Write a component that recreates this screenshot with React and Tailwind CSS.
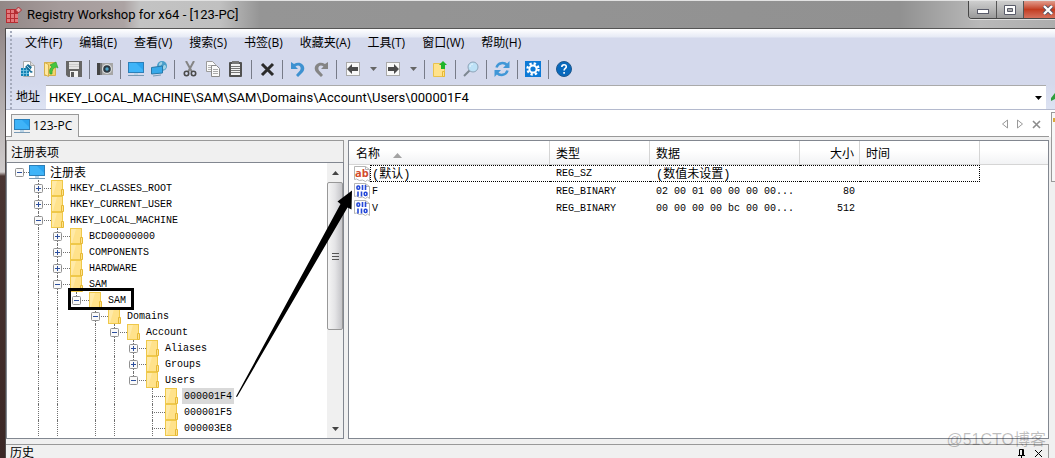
import { Fragment } from "react";

const menus = ["文件(F)", "编辑(E)", "查看(V)", "搜索(S)", "书签(B)", "收藏夹(A)", "工具(T)", "窗口(W)", "帮助(H)"];

// guides: which ancestor columns keep a vertical line on this row
const keys = [
  { label: "HKEY_CLASSES_ROOT", guides: [], expander: "plus" },
  { label: "HKEY_CURRENT_USER", guides: [], expander: "plus" },
  { label: "HKEY_LOCAL_MACHINE", guides: [], expander: "minus" },
  { label: "BCD00000000", guides: [true], expander: "plus" },
  { label: "COMPONENTS", guides: [true], expander: "plus" },
  { label: "HARDWARE", guides: [true], expander: "plus" },
  { label: "SAM", guides: [true], expander: "minus" },
  { label: "SAM", guides: [true, true], expander: "minus", last: true, marked: true },
  { label: "Domains", guides: [true, true, false], expander: "minus" },
  { label: "Account", guides: [true, true, false, true], expander: "minus" },
  { label: "Aliases", guides: [true, true, false, true, true], expander: "plus" },
  { label: "Groups", guides: [true, true, false, true, true], expander: "plus" },
  { label: "Users", guides: [true, true, false, true, true], expander: "minus", last: true },
  { label: "000001F4", guides: [true, true, false, true, true, false], selected: true },
  { label: "000001F5", guides: [true, true, false, true, true, false] },
  { label: "000003E8", guides: [true, true, false, true, true, false] },
];

const values = [
  { icon: "text", name: "(默认)", type: "REG_SZ", data: "(数值未设置)", size: "", focused: true },
  { icon: "binary", name: "F", type: "REG_BINARY", data: "02 00 01 00 00 00 00...", size: "80" },
  { icon: "binary", name: "V", type: "REG_BINARY", data: "00 00 00 00 bc 00 00...", size: "512" },
];

function Svg({ children, w = 16, h = 16, className = "" }) {
  return (
    <svg width={w} height={h} viewBox={`0 0 ${w} ${h}`} className={`shrink-0 ${className}`} aria-hidden="true">
      {children}
    </svg>
  );
}

const Monitor = () => (
  <Svg>
    <rect x="0.5" y="1.5" width="15" height="10" fill="#3fb4f8" stroke="#2d7fb8" />
    <path d="M8 2H15V9Z" fill="#2ba4ef" />
    <path d="M6 12h4v2H6z" fill="#b9d3e6" />
    <path d="M0 14.5h16" stroke="#7899b3" />
  </Svg>
);

const Folder = () => (
  <Svg w={13}>
    <rect x="0.5" y="0.5" width="11" height="15" fill="#ffe28b" stroke="#efc84a" />
    <path d="M1 1h5L2 15H1z" fill="#ffeaa8" />
    <path d="M10.5 9.5h2v6h-2z" fill="#ffe28b" stroke="#e6b935" />
  </Svg>
);

const icons = {
  create: (
    <Svg>
      <path d="M3.500.5h7l4 4v11h-11z" fill="#fbfbfb" stroke="#a9a9a9" />
      <path d="M10.500.5v4h4" fill="#ddd" stroke="#a9a9a9" />
      <path d="M1 7h8v8H1z" fill="#1482b4" />
      <path d="M1 9.500h8M1 12.500h8M3.500 7v8M6.500 7v8" stroke="#7fcbe8" strokeWidth=".8" />
      <path d="m5 6 3-3 4 3-2 3 3 2-2 1-3-3z" fill="#1b6f98" />
      <path d="m7 5 3 3" stroke="#9cd3ea" />
    </Svg>
  ),
  open: (
    <Svg>
      <path d="M1.500 1.500h11v13h-11z" fill="#f3d36c" stroke="#d6b04c" />
      <path d="M1.500 1.500l4 2v12l-4-2z" fill="#ffe89f" stroke="#d6b04c" />
      <path d="M7 13c-1-4 0-6 2-7L7 4l6-3 2 6-2-1c-3 1-4 3-4 7z" fill="#45c63f" stroke="#2a9a2c" strokeWidth=".6" />
    </Svg>
  ),
  save: (
    <Svg>
      <path d="M0 0h16v16H2l-2-2z" fill="#666" />
      <path d="M3 1h10v7H3z" fill="#e4e4e4" />
      <path d="M3 3.500h10M3 5.500h10" stroke="#ccc" />
      <path d="M4 10h8v6H4z" fill="#f3f3f3" />
      <path d="M5 11h3v5H5z" fill="#5c5c5c" />
    </Svg>
  ),
  camera: (
    <Svg>
      <path d="M0 2h3v12H0z" fill="#454545" />
      <path d="M3 2h13v12H3z" fill="#a6a6a6" />
      <path d="M3 2h2v12H3z" fill="#777" />
      <circle cx="10" cy="8" r="5" fill="#ddd" />
      <circle cx="10" cy="8" r="3.800" fill="#2d3943" />
      <circle cx="10" cy="8" r="1.700" fill="#51a6c8" />
    </Svg>
  ),
  monitor: <Monitor />,
  network: (
    <Svg>
      <circle cx="11" cy="5" r="5" fill="#4a9fca" />
      <path d="M8 3c2-3 4-2 3 0S8 6 8 3m5 1c2 0 3 2 1 4s-3-2-1-4" fill="#a2d3e5" />
      <path d="M.5 6.500 11.500 5v7L.5 13z" fill="#37a9ea" stroke="#2879a8" />
      <path d="M2 15l8-1" stroke="#7899b3" />
    </Svg>
  ),
  cut: (
    <Svg>
      <path d="M4 0l6 11M12 0L6 11" stroke="#858585" strokeWidth="2" />
      <circle cx="4.500" cy="12.500" r="2.200" fill="none" stroke="#4b4b4b" strokeWidth="1.600" />
      <circle cx="11.500" cy="12.500" r="2.200" fill="none" stroke="#4b4b4b" strokeWidth="1.600" />
    </Svg>
  ),
  copy: (
    <Svg>
      <path d="M1.500.5h6l3 3v7h-9z" fill="#fafafa" stroke="#9b9b9b" />
      <path d="M3 4.500h5M3 6.500h5M3 8.500h3" stroke="#b5b5b5" />
      <path d="M6.500 4.500h5l3 3v8h-8z" fill="#fafafa" stroke="#8b8b8b" />
      <path d="M8 8.500h5M8 10.500h5M8 12.500h5" stroke="#aaa" />
    </Svg>
  ),
  paste: (
    <Svg>
      <rect x="1" y="1" width="13" height="15" rx="1" fill="#515151" />
      <path d="M3 3h9v11H3z" fill="#f3f3f3" />
      <path d="M4 0h7v3H4z" fill="#777" />
      <path d="M3 5.500h9M3 7.500h9M3 9.500h9M3 11.500h9" stroke="#777" />
    </Svg>
  ),
  remove: (
    <Svg>
      <path d="m3 3 11 11M14 3 3 14" stroke="#2b2b2b" strokeWidth="3" />
    </Svg>
  ),
  undo: (
    <Svg>
      <path d="M1 1v7h7L5.500 5.500C9 3 12 6 10 9.500L6 14l2 2 5-5c4-5-2-12-9-8z" fill="#3e92d1" />
    </Svg>
  ),
  redo: (
    <Svg>
      <path d="M15 1v7H8l2.500-2.500C7 3 4 6 6 9.500l4 4.500-2 2-5-5c-4-5 2-12 9-8z" fill="#858585" />
    </Svg>
  ),
  back: (
    <Svg>
      <rect x="1.500" y="1.500" width="13" height="13" fill="#f8f8f8" stroke="#aaa" />
      <path d="M2 8l5-5v3h6v4H7v3z" fill="#4b4b4b" />
    </Svg>
  ),
  forward: (
    <Svg>
      <rect x="1.500" y="1.500" width="13" height="13" fill="#f8f8f8" stroke="#aaa" />
      <path d="M14 8 9 3v3H3v4h6v3z" fill="#4b4b4b" />
    </Svg>
  ),
  up: (
    <Svg>
      <path d="M1.500 2.500h11v13h-11z" fill="#ffe28b" stroke="#e9c24d" />
      <path d="M10.500 10.500h2v5h-2z" fill="#ffe28b" stroke="#e6b935" />
      <path d="m11 0 4 4h-2v4H9V4H7z" fill="#1fb52b" />
    </Svg>
  ),
  search: (
    <Svg>
      <path d="m1 15 6-6" stroke="#7c8791" strokeWidth="2" />
      <circle cx="10" cy="6" r="5" fill="#bde2f7" stroke="#8da4b8" />
      <path d="M7 6c0-2 1-3 3-3" stroke="#e7f7ff" fill="none" />
    </Svg>
  ),
  refresh: (
    <Svg>
      <path d="M2.500 6.500C4 1.500 10 1 13 4" fill="none" stroke="#4097d7" strokeWidth="2.500" />
      <path d="M15.500 0v7H9z" fill="#4097d7" />
      <path d="M13.500 9.500C12 14.500 6 15 3 12" fill="none" stroke="#4097d7" strokeWidth="2.500" />
      <path d="M.5 16V9H7z" fill="#4097d7" />
    </Svg>
  ),
  settings: (
    <Svg>
      <path d="M0 0h16v16H0z" fill="#0c79d6" />
      <circle cx="8" cy="8" r="5.500" fill="none" stroke="#fff" strokeWidth="2.400" strokeDasharray="2.300 2.020" />
      <circle cx="8" cy="8" r="3.600" fill="none" stroke="#fff" strokeWidth="2" />
    </Svg>
  ),
  help: (
    <Svg>
      <circle cx="8" cy="8" r="7.500" fill="#0869bd" stroke="#20588c" />
      <path d="M5.800 6c0-3 4.500-3 4.500-.2 0 1.700-2.200 1.600-2.200 3.700M8.100 11v1.700" fill="none" stroke="#fff" strokeWidth="1.600" />
    </Svg>
  ),
};

const toolGroups = [
  ["create", "open", "save"],
  ["camera"],
  ["monitor", "network"],
  ["cut", "copy", "paste"],
  ["remove"],
  ["undo", "redo"],
  ["back", "forward"],
  ["up"],
  ["search"],
  ["refresh"],
  ["settings"],
  ["help"],
];

function TitleBar() {
  return (
    <header className="flex h-7 shrink-0 items-start border-t border-[#e2e2e2] bg-[linear-gradient(90deg,#928786_0,#a59b9b_60px,#aca3a3_124px,#c3c3c3_140px,#c0c0c0_220px,#959595_260px,#919191_900px,#b9b9b9_980px,#adadad_100%)]">
      <div className="flex h-full min-w-0 flex-1 items-center pl-[6px]">
        <Svg>
          <path d="M0 2h12v14H0z" fill="#b62c32" />
          <path d="M1 3h3v3H1zM5 3h3v3H5zM1 7h3v4H1zM5 7h3v4H5zM9 7h3v4H9zM1 12h3v3H1zM5 12h3v3H5zM9 12h3v3H9z" fill="#e3797c" />
          <path d="m12.500 0 3 3-3 3-3-3z" fill="#eaa4a5" stroke="#a92a30" />
        </Svg>
        <h1 className="ml-[5px] truncate font-[Roboto,sans-serif] text-[13px]">Registry Workshop for x64 - [123-PC]</h1>
      </div>
      <div className="flex h-[18px] w-[87px] shrink-0 overflow-hidden rounded-bl border-b border-l border-[#464646] shadow-[0_1px_0_#ddd]">
        <button aria-label="最小化" className="flex w-7 shrink-0 items-center justify-center border-r border-[#555] bg-linear-to-b from-[#cecece] via-[#b5b5b5] to-[#999]">
          <Svg w={12} h={10}>
            <rect x="0.500" y="4.500" width="11" height="4" fill="#fff" stroke="#595b69" />
          </Svg>
        </button>
        <button aria-label="最大化" className="flex w-[27px] shrink-0 items-center justify-center border-r border-[#555] bg-linear-to-b from-[#cecece] via-[#b5b5b5] to-[#999]">
          <Svg w={12} h={10}>
            <path d="M.5.5h11v9H.5z" fill="#fff" stroke="#595b69" />
            <path d="M3.500 3.500h5v3h-5z" fill="#aaa" stroke="#595b69" />
          </Svg>
        </button>
        <button aria-label="关闭" className="flex w-[47px] shrink-0 items-center justify-center bg-linear-to-b from-[#e09b8c] via-[#c23c20] to-[#d5705c]">
          <Svg w={12} h={10}>
            <path d="m2 1 8 8M10 1 2 9" stroke="#505265" strokeWidth="4" />
            <path d="m2 1 8 8M10 1 2 9" stroke="#fff" strokeWidth="2.400" />
          </Svg>
        </button>
      </div>
    </header>
  );
}

function ToolBar() {
  return (
    <div className="flex h-6 items-center">
      {toolGroups.map((group, i) => (
        <Fragment key={i}>
          {i > 0 && (
            <div className="flex w-2 shrink-0 justify-center">
              <div className="h-[19px] w-px bg-[#777b88]" />
            </div>
          )}
          {group.map((name) => (
            <Fragment key={name}>
              <button aria-label={name} className={`flex h-6 shrink-0 items-center justify-center ${name === "back" || name === "forward" ? "w-[26px]" : "w-[23px]"}`}>
                {icons[name]}
              </button>
              {(name === "back" || name === "forward") && (
                <button aria-label={`${name} history`} className="flex h-6 w-[14px] shrink-0 items-center justify-center">
                  <Svg w={7} h={4}>
                    <path d="M0 0h7L3.500 4z" fill="#666" />
                  </Svg>
                </button>
              )}
            </Fragment>
          ))}
        </Fragment>
      ))}
    </div>
  );
}

function CommandArea() {
  return (
    <div className="flex h-[81px] shrink-0 border-b border-[#b4bace] bg-[linear-gradient(180deg,#fff_0,#e6eaf5_8px,#d4d9ec_9px,#d4d9ec_55px,#dde3f3_100%)]">
      <div className="mt-[2px] ml-[4px] w-[6px] shrink-0 border-l-2 border-dotted border-[#a5abbc]" />
      <div className="flex min-w-0 flex-1 flex-col">
        <nav className="flex h-7 items-center gap-px pl-[1px]">
          {menus.map((m) => (
            <button key={m} className="px-2 text-[12px] whitespace-nowrap">{m}</button>
          ))}
        </nav>
        <ToolBar />
        <div className="mt-1 flex h-6 items-center">
          <label htmlFor="address" className="w-[30px] shrink-0 text-[12px] whitespace-nowrap">地址</label>
          <div className="flex h-full min-w-0 flex-1 items-center border-t border-[#aaa] bg-white">
            <input
              id="address"
              className="min-w-0 flex-1 pl-[3px] font-[Roboto,sans-serif] text-[13px] leading-5 outline-none"
              defaultValue="HKEY_LOCAL_MACHINE\SAM\SAM\Domains\Account\Users\000001F4"
            />
            <button aria-label="地址列表" className="flex h-full w-4 items-center justify-center">
              <Svg w={7} h={4}>
                <path d="M0 0h7L3.500 4z" fill="#000" />
              </Svg>
            </button>
          </div>
          <button aria-label="转到" className="flex w-[9px] justify-end overflow-hidden">
            <Svg w={4} h={8}>
              <path d="M0 8V5l4-5v6z" fill="#2f9e3c" />
            </Svg>
          </button>
        </div>
      </div>
    </div>
  );
}

function TabStrip() {
  return (
    <div className="flex h-[27px] shrink-0 items-end border-b border-[#999] bg-white pl-[5px]">
      <button className="-mb-px flex h-[23px] items-center gap-[3px] border border-b-0 border-[#999] bg-[#f0f0f0] pr-[6px] pl-[2px] text-[12px]">
        <Monitor />
        123-PC
      </button>
      <div className="mr-[8px] mb-[7px] ml-auto flex items-center gap-[9px]">
        <button aria-label="上一个标签">
          <Svg w={6} h={10}><path d="M5.500 1v8l-5-4z" fill="none" stroke="#999" /></Svg>
        </button>
        <button aria-label="下一个标签">
          <Svg w={6} h={10}><path d="M.5 1v8l5-4z" fill="none" stroke="#999" /></Svg>
        </button>
        <button aria-label="关闭标签">
          <Svg w={9} h={9}><path d="m1 1 7 7M8 1 1 8" stroke="#8c8c8c" strokeWidth="1.600" /></Svg>
        </button>
      </div>
    </div>
  );
}

function Expander({ kind }) {
  return (
    <Svg w={9} h={9}>
      <rect x="0.500" y="0.500" width="8" height="8" rx="1" fill="#fafafa" stroke="#919191" />
      <path d={kind === "plus" ? "M2 4.500h5M4.500 2v5" : "M2 4.500h5"} stroke="#2c4f9e" />
    </Svg>
  );
}

function TreeRow({ item }) {
  return (
    <li className="relative flex h-4 items-center pl-[19px]">
      {item.guides.map((on, i) => (
        <div key={i} className="flex h-4 w-[19px] shrink-0 pl-[9px]">
          {on && <div className="border-l border-dotted border-[#707070]" />}
        </div>
      ))}
      <div className="grid h-4 w-[22px] shrink-0 grid-cols-[19px_3px] items-center">
        <div className={`col-start-1 row-start-1 ml-[9px] border-l border-dotted border-[#707070] ${item.last ? "h-2 self-start" : "h-4"}`} />
        <div className="col-span-2 col-start-1 row-start-1 ml-[9px] border-t border-dotted border-[#707070]" />
        {item.expander && (
          <button aria-label={item.label} className="z-10 col-start-1 row-start-1 ml-[5px] w-[9px]">
            <Expander kind={item.expander} />
          </button>
        )}
      </div>
      <Folder />
      <span className={`ml-[4px] px-[2px] pt-[2px] leading-[14px] whitespace-nowrap ${item.selected ? "bg-[#d9d9d9]" : ""}`}>{item.label}</span>
      {item.marked && <div className="absolute -top-1 left-[58px] z-20 h-[22px] w-[66px] border-[3px] border-black" />}
    </li>
  );
}

function ScrollBar() {
  return (
    <div className="flex w-4 shrink-0 flex-col bg-[#f0f0f0]">
      <div className="flex h-[19px] items-center justify-center">
        <Svg w={7} h={4}><path d="M0 4h7L3.500 0z" fill="#444" /></Svg>
      </div>
      <div className="flex h-[148px] flex-col items-center justify-center gap-[2px] rounded-[2px] border border-[#989898] bg-linear-to-r from-[#f5f5f5] via-[#e4e4e6] to-[#c4c4c8]">
        <div className="h-px w-[7px] bg-[#555]" />
        <div className="h-px w-[7px] bg-[#555]" />
        <div className="h-px w-[7px] bg-[#555]" />
      </div>
      <div className="mt-auto flex h-[19px] items-center justify-center">
        <Svg w={7} h={4}><path d="M0 0h7L3.500 4z" fill="#444" /></Svg>
      </div>
    </div>
  );
}

function KeyPane() {
  return (
    <section className="flex w-[338px] shrink-0 flex-col">
      <h2 className="h-[22px] shrink-0 border border-b-0 border-[#999] pt-[2px] pl-1 text-[12px] leading-5">注册表项</h2>
      <div className="flex min-h-0 flex-1 border border-[#828790] bg-white">
        <ul className="min-w-0 flex-1 overflow-hidden pt-px pl-[3px] font-['Liberation_Mono','Noto_Sans_CJK_SC',monospace] text-[10px]">
          <li className="flex h-4 items-center">
            <div className="grid w-[19px] shrink-0 items-center">
              <div className="col-start-1 row-start-1 ml-[9px] border-t border-dotted border-[#707070]" />
              <button aria-label="注册表" className="z-10 col-start-1 row-start-1 ml-[5px] w-[9px]">
                <Expander kind="minus" />
              </button>
            </div>
            <Monitor />
            <span className="ml-[5px] pt-[4px] text-[12px] leading-[14px]">注册表</span>
          </li>
          {keys.map((item, i) => (
            <TreeRow key={i} item={item} />
          ))}
        </ul>
        <ScrollBar />
      </div>
    </section>
  );
}

function ValueIcon({ kind }) {
  return (
    <Svg>
      <path d="M.5.5h11l4 3v12l-2-1.500-2 1.500-3-1.500-3 .5-3-1.500-2 .5z" fill="#fff" stroke="#b5b5b5" />
      <path d="M11.500.5v3h4" fill="none" stroke="#b5b5b5" />
      {kind === "text" ? (
        <text x="1" y="11" fontSize="11" fontWeight="700" fill="#d2492a" fontFamily="Open Sans">ab</text>
      ) : (
        <g fill="none" stroke="#2448d8" strokeWidth="1.600">
          <rect x="3" y="3" width="2.600" height="3.200" rx="1" />
          <path d="M8.500 2v5M11.500 2v5M4 8.500v5M7.500 8.500v5" />
          <rect x="10.300" y="9.300" width="2.600" height="3.200" rx="1" />
        </g>
      )}
    </Svg>
  );
}

function ValuePane() {
  return (
    <section className="min-w-0 flex-1 overflow-hidden border border-[#828790] bg-white">
      <table className="w-full table-fixed border-separate border-spacing-0 font-['Liberation_Mono','Noto_Sans_CJK_SC',monospace] text-[10px]">
        <colgroup>
          <col className="w-[201px]" />
          <col className="w-[100px]" />
          <col className="w-[150px]" />
          <col className="w-[60px]" />
          <col className="w-[120px]" />
          <col />
        </colgroup>
        <thead>
          <tr className="h-6 bg-linear-to-b from-white from-40% to-[#f1f2f4] text-left text-[12px] leading-[17px] [&>th]:border-b [&>th]:border-[#d5d5d5] [&>th]:pt-[5px] [&>th]:font-normal">
            <th className="border-r pl-[7px]">
              <div className="flex items-center gap-[13px]">
                名称
                <Svg w={9} h={5}><path d="M0 5h9L4.500 0z" fill="#a3a3a3" /></Svg>
              </div>
            </th>
            <th className="border-r pl-[6px]">类型</th>
            <th className="border-r pl-[6px]">数据</th>
            <th className="border-r pr-[5px] text-right">大小</th>
            <th className="border-r pl-[6px]">时间</th>
            <th aria-label="空" />
          </tr>
        </thead>
        <tbody>
          {values.map((v) => (
            <tr key={v.name} className={`h-[17px] ${v.focused ? "[&>td:not(:first-child):not(:last-child)]:border-y [&>td]:border-dotted [&>td]:border-black" : ""}`}>
              <td className="p-0 pl-[5px]">
                <div className="flex items-center">
                  <ValueIcon kind={v.icon} />
                  <span className={`h-[17px] flex-1 ${v.focused ? "border-y border-l border-dotted border-black pt-[4px] pl-px text-[12px] leading-[11px]" : "pt-[2px] pl-[2px] leading-[15px]"}`}>{v.name}</span>
                </div>
              </td>
              <td className={`p-0 pl-[6px] whitespace-nowrap ${v.focused ? "pt-px leading-[14px]" : "pt-[2px] leading-[15px]"}`}>{v.type}</td>
              <td className={`p-0 pl-[6px] whitespace-nowrap ${v.focused ? "pt-[4px] text-[12px] leading-[11px]" : "pt-[2px] leading-[15px]"}`}>{v.data}</td>
              <td className={`p-0 pr-[5px] text-right ${v.focused ? "" : "pt-[2px] leading-[15px]"}`}>{v.size}</td>
              <td className={`p-0 ${v.focused ? "border-r" : ""}`} />
              <td className="p-0" />
            </tr>
          ))}
        </tbody>
      </table>
    </section>
  );
}

function HistoryPane() {
  return (
    <section className="mt-[5px] flex h-[14px] shrink-0 items-start border-t border-r border-[#999] pl-1">
      <h2 className="text-[12px] leading-[15px]">历史</h2>
      <div className="mt-[4px] mr-[5px] ml-auto flex gap-[8px]">
        <button aria-label="固定">
          <Svg w={9} h={9}><path d="M2.500 6V.5h4V6M5.500 1v5M1 6.500h7M4.500 7v2" fill="none" stroke="#000" /></Svg>
        </button>
        <button aria-label="关闭历史">
          <Svg w={9} h={9}><path d="m1 1 7 7M8 1 1 8" stroke="#000" /></Svg>
        </button>
      </div>
    </section>
  );
}

export default function App() {
  return (
    <div className="relative flex h-screen flex-col overflow-hidden bg-[#f0f0f0] font-['Open_Sans','Noto_Sans_CJK_SC',sans-serif] text-black">
      <TitleBar />
      <div className="flex min-h-0 flex-1">
        <div className="w-[6px] shrink-0 border-r border-[#4f4a4a] bg-[linear-gradient(180deg,#928787_0,#bdb9b9_100px,#d0cccc_144px,#4a3532_148px,#3b2725_100%)]" />
        <main className="flex min-w-0 flex-1 flex-col border-t border-[#555]">
          <CommandArea />
          <div className="flex min-h-0 flex-1">
            <div className="flex min-w-0 flex-1 flex-col">
              <TabStrip />
              <div className="mt-[3px] flex min-h-0 flex-1 gap-[4px]">
                <KeyPane />
                <ValuePane />
              </div>
              <HistoryPane />
            </div>
            <aside className="w-[6px] shrink-0 overflow-hidden bg-[linear-gradient(180deg,#fff_27px,#f0f0f0_27px)] pt-[2px] pl-[2px]">
              <div className="h-[70px] w-5 border border-[#999] bg-[#f7f7f7] pt-[5px] pl-px">
                <div className="size-1 bg-[#d9a93c]" />
              </div>
            </aside>
          </div>
        </main>
      </div>
      <svg className="pointer-events-none absolute top-0 left-0 z-30" width="360" height="400" viewBox="0 0 360 400" aria-hidden="true">
        <path d="M236 396.500 340.500 204 337.500 201.500 352 190.500 351.500 209.500 347.500 207.500 237 397z" fill="#000" />
      </svg>
      <span className="pointer-events-none absolute right-[9px] bottom-[6px] z-30 font-['Liberation_Sans','Noto_Sans_CJK_SC',sans-serif] text-[16px] leading-6 text-black/25">@51CTO博客</span>
    </div>
  );
}
